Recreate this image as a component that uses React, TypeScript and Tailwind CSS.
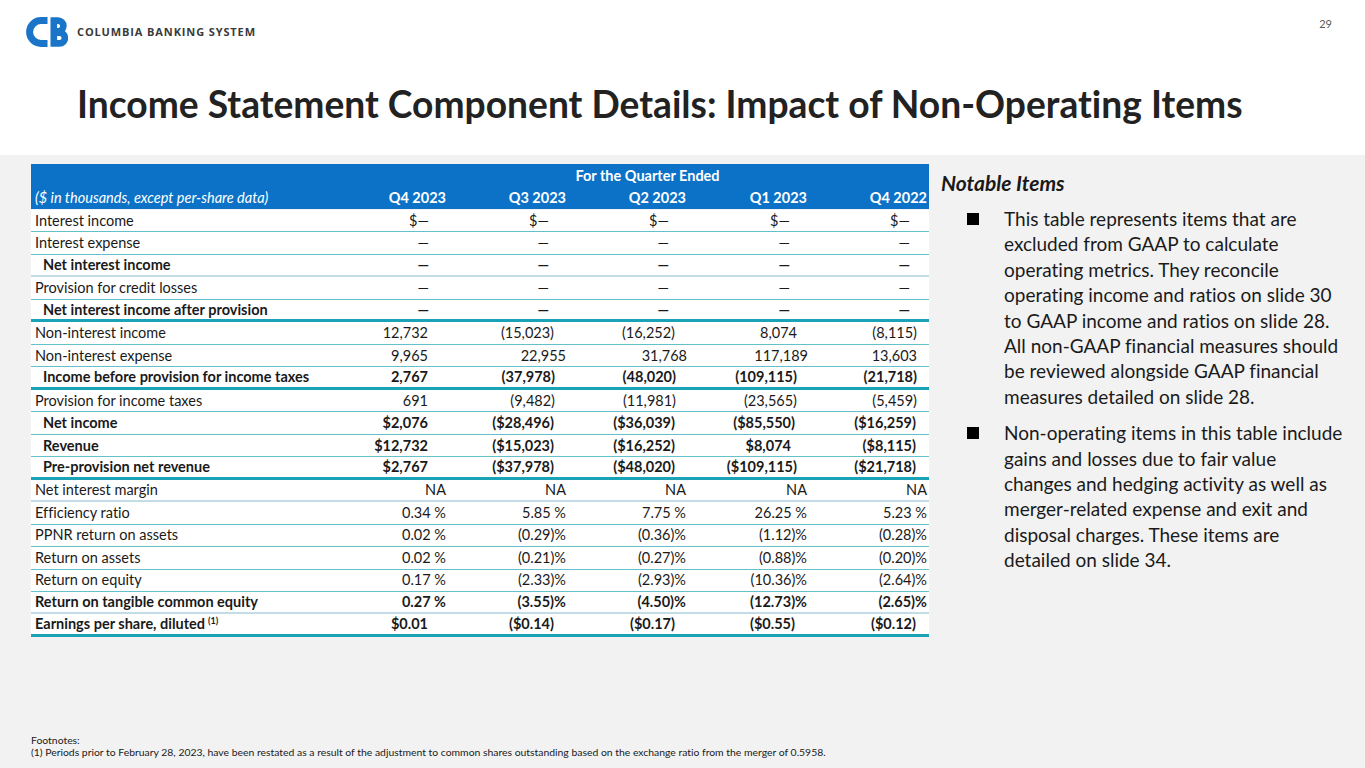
import React from 'react';

type Row = {
  label: string;
  values: string[];
  bold?: boolean;
  indent?: boolean;
  line?: 'thin' | 'light' | 'thick';
  pr?: number[];
  sup?: string;
};

const dollarDash = ['$—', '$—', '$—', '$—', '$—'];
const dash = ['—', '—', '—', '—', '—'];

const rows: Row[] = [
  { label: 'Interest income', values: dollarDash },
  { label: 'Interest expense', values: dash },
  { label: 'Net interest income', values: dash, bold: true, indent: true, line: 'light' },
  { label: 'Provision for credit losses', values: dash },
  { label: 'Net interest income after provision', values: dash, bold: true, indent: true, line: 'thick' },
  { label: 'Non-interest income', values: ['12,732', '(15,023)', '(16,252)', '8,074', '(8,115)'], pr: [20, 14, 13, 12, 12] },
  { label: 'Non-interest expense', values: ['9,965', '22,955', '31,768', '117,189', '13,603'], pr: [20, 2, 1, 1, 12] },
  { label: 'Income before provision for income taxes', values: ['2,767', '(37,978)', '(48,020)', '(109,115)', '(21,718)'], bold: true, indent: true, line: 'thick', pr: [20, 13, 12, 12, 12] },
  { label: 'Provision for income taxes', values: ['691', '(9,482)', '(11,981)', '(23,565)', '(5,459)'], pr: [20, 13, 12, 12, 12] },
  { label: 'Net income', values: ['$2,076', '($28,496)', '($36,039)', '($85,550)', '($16,259)'], bold: true, indent: true, pr: [20, 14, 13, 14, 13] },
  { label: 'Revenue', values: ['$12,732', '($15,023)', '($16,252)', '$8,074', '($8,115)'], bold: true, indent: true, pr: [20, 14, 13, 18, 13] },
  { label: 'Pre-provision net revenue', values: ['$2,767', '($37,978)', '($48,020)', '($109,115)', '($21,718)'], bold: true, indent: true, line: 'thick', pr: [20, 14, 13, 12, 13] },
  { label: 'Net interest margin', values: ['NA', 'NA', 'NA', 'NA', 'NA'], line: 'light' },
  { label: 'Efficiency ratio', values: ['0.34 %', '5.85 %', '7.75 %', '26.25 %', '5.23 %'] },
  { label: 'PPNR return on assets', values: ['0.02 %', '(0.29)%', '(0.36)%', '(1.12)%', '(0.28)%'] },
  { label: 'Return on assets', values: ['0.02 %', '(0.21)%', '(0.27)%', '(0.88)%', '(0.20)%'] },
  { label: 'Return on equity', values: ['0.17 %', '(2.33)%', '(2.93)%', '(10.36)%', '(2.64)%'] },
  { label: 'Return on tangible common equity', values: ['0.27 %', '(3.55)%', '(4.50)%', '(12.73)%', '(2.65)%'], bold: true, line: 'light' },
  { label: 'Earnings per share, diluted', sup: '(1)', values: ['$0.01', '($0.14)', '($0.17)', '($0.55)', '($0.12)'], bold: true, line: 'thick', pr: [20, 14, 13, 14, 13] },
];

const colW = ['w-[119px]', 'w-[120px]', 'w-[120px]', 'w-[121px]', 'w-[120px]'];
const quarters = ['Q4 2023', 'Q3 2023', 'Q2 2023', 'Q1 2023', 'Q4 2022'];

const notes = [
  [
    'This table represents items that are',
    'excluded from GAAP to calculate',
    'operating metrics. They reconcile',
    'operating income and ratios on slide 30',
    'to GAAP income and ratios on slide 28.',
    'All non-GAAP financial measures should',
    'be reviewed alongside GAAP financial',
    'measures detailed on slide 28.',
  ],
  [
    'Non-operating items in this table include',
    'gains and losses due to fair value',
    'changes and hedging activity as well as',
    'merger-related expense and exit and',
    'disposal charges. These items are',
    'detailed on slide 34.',
  ],
];

function padFor(v: string) {
  if (v.includes('—')) return 19;
  if (v.endsWith('%') || v === 'NA') return 2;
  return 14;
}

function Logo() {
  return (
    <div className="flex items-center gap-[9px]">
      <svg width="42" height="30" viewBox="0 0 42 30">
        <path d="M21.5 3.6 H15 A11.4 11.4 0 0 0 15 26.4 H21.5" fill="none" stroke="#1a75c8" strokeWidth="7" />
        <path
          d="M24.5 3.6 H32 A5.4 5.4 0 0 1 32 14.4 H27.5 M27.5 15.6 H33.5 A5.4 5.4 0 0 1 33.5 26.4 H24.5 M27.8 1 V29"
          fill="none"
          stroke="#1a75c8"
          strokeWidth="6.6"
        />
      </svg>
      <span className="text-[11px] font-bold tracking-[0.08em] text-[#3a3a3a] font-['Open_Sans',sans-serif]">
        COLUMBIA BANKING SYSTEM
      </span>
    </div>
  );
}

function TableRow({ row }: { row: Row }) {
  const line =
    row.line === 'thick'
      ? 'border-b-[3px] border-[#1aa3b6]'
      : row.line === 'light'
        ? 'border-b-2 border-[#c2dde6]'
        : 'border-b border-[#62c1ca]';
  return (
    <div className={`flex h-[22.47px] items-center bg-white box-border ${line} ${row.bold ? 'font-bold' : ''}`}>
      <div className={`w-[298px] whitespace-nowrap ${row.indent ? 'pl-[12px]' : 'pl-[4px]'}`}>
        {row.label}
        {row.sup && <sup className="text-[9px] ml-[3px] -top-[5px]">{row.sup}</sup>}
      </div>
      {row.values.map((v, i) => (
        <div
          key={i}
          className={`${colW[i]} text-right whitespace-nowrap`}
          style={{ paddingRight: row.pr && !v.endsWith('%') ? row.pr[i] : padFor(v) }}
        >
          {v}
        </div>
      ))}
    </div>
  );
}

export default function App() {
  return (
    <div className="w-[1365px] h-[768px] bg-white flex flex-col overflow-hidden font-['Lato',sans-serif] text-[#1a1a1a] [font-variant-ligatures:none]">
      <div className="h-[155px] flex flex-col">
        <div className="flex justify-between pt-[17px] pl-[26px] pr-[33px]">
          <Logo />
          <span className="text-[11px] text-[#595959] -mt-[1px]">29</span>
        </div>
        <h1 className="pl-[77px] mt-[35px] text-[37.2px] leading-[44px] font-bold text-[#222] whitespace-nowrap">
          Income Statement Component Details: Impact of Non-Operating Items
        </h1>
      </div>

      <div className="flex-1 bg-[#f2f2f2] flex flex-col">
        <div className="flex pt-[9px]">
          <div className="ml-[31px] w-[898px] text-[14.5px]">
            <div className="bg-[#0b72c7] text-white font-bold">
              <div className="h-[23px] flex items-center">
                <div className="w-[298px]" />
                <div className="flex-1 text-center pl-[37px]">For the Quarter Ended</div>
              </div>
              <div className="h-[22px] flex items-center">
                <div className="w-[298px] pl-[4px] italic font-normal whitespace-nowrap">
                  ($ in thousands, except per-share data)
                </div>
                {quarters.map((q, i) => (
                  <div key={q} className={`${colW[i]} text-right pr-[2px]`}>
                    {q}
                  </div>
                ))}
              </div>
            </div>
            <div className="mt-[1px]">
              {rows.map((r) => (
                <TableRow key={r.label} row={r} />
              ))}
            </div>
          </div>

          <div className="ml-[12px] w-[420px] text-[#1a1a1a]">
            <div className="text-[21px] font-bold italic leading-[28px] mt-[5px]">Notable Items</div>
            <div className="mt-[9px] text-[19px] leading-[25.4px] flex flex-col gap-[11px]">
              {notes.map((lines, i) => (
                <div key={i} className="flex">
                  <span className="w-[12px] h-[12px] bg-black mt-[7px] ml-[26px] mr-[25px] shrink-0" />
                  <p className="whitespace-nowrap">
                    {lines.map((l, j) => (
                      <span key={j} className="block">
                        {l}
                      </span>
                    ))}
                  </p>
                </div>
              ))}
            </div>
          </div>
        </div>

        <div className="mt-auto pl-[31px] pb-[10px] text-[10.4px] leading-[12px] text-[#1a1a1a]">
          <div>Footnotes:</div>
          <div className="whitespace-nowrap">
            (1) Periods prior to February 28, 2023, have been restated as a result of the adjustment to common shares
            outstanding based on the exchange ratio from the merger of 0.5958.
          </div>
        </div>
      </div>
    </div>
  );
}
